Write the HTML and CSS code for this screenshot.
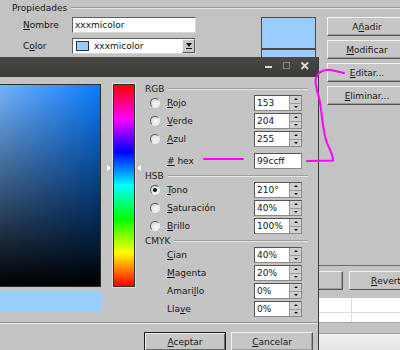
FILE: index.html
```html
<!DOCTYPE html>
<html>
  <head>
    <title>Colores</title>
    <meta charset="UTF-8" />
    <link rel="stylesheet" href="styles.css">
  </head>
  <body>
    <div class="app">
      <div class="top">
        <div class="legend"><span>Propiedades</span></div>
        <div class="props">
          <div class="form">
            <div class="frow">
              <label><u>N</u>ombre</label>
              <div class="entry">xxxmicolor</div>
            </div>
            <div class="frow">
              <label>C<u>o</u>lor</label>
              <div class="combo">
                <span class="chip"></span>
                <span class="ctext">xxxmicolor</span>
                <span class="carrow"></span>
              </div>
            </div>
          </div>
          <div class="preview">
            <div class="pv1"></div>
            <div class="pv2"></div>
          </div>
          <div class="side">
            <button class="btn">A<u>ñ</u>adir</button>
            <button class="btn"><u>M</u>odificar</button>
            <button class="btn"><u>E</u>ditar...</button>
            <button class="btn"><u>E</u>liminar...</button>
          </div>
        </div>
      </div>
      <div class="lower">
        <div class="lbtns">
          <button class="btn"></button>
          <button class="btn revert"><u>R</u>evert</button>
        </div>
        <div class="table">
          <div class="trow"><span class="cell"></span><span class="cell"></span></div>
          <div class="trow short"><span class="cell"></span><span class="cell"></span></div>
        </div>
        <div class="band"></div>
        <div class="pane"></div>
      </div>
    </div>

    <div class="dialog">
      <div class="titlebar">
        <svg width="48" height="20" viewBox="0 0 48 20">
          <rect x="2" y="9" width="7" height="2" fill="#dcd8cf"/>
          <rect x="20.5" y="5.5" width="6" height="6" fill="none" stroke="#8a8782" stroke-width="1"/>
          <path d="M38.5 5.5 L45 12 M45 5.5 L38.5 12" stroke="#dcd8cf" stroke-width="2"/>
        </svg>
      </div>
      <div class="dbody">
        <div class="svcol">
          <div class="field"></div>
          <div class="swatch"></div>
        </div>
        <div class="huecol">
          <div class="hue"></div>
          <span class="harrow right"></span>
          <span class="harrow left"></span>
        </div>
        <div class="panel">
          <div class="ghead">RGB</div>
          <div class="row">
            <span class="slot"><span class="radio"></span></span>
            <span class="lbl"><u>R</u>ojo</span>
            <span class="spin"><span class="val">153</span><span class="arrows"><i class="up"></i><i class="dn"></i></span></span>
          </div>
          <div class="row">
            <span class="slot"><span class="radio"></span></span>
            <span class="lbl"><u>V</u>erde</span>
            <span class="spin"><span class="val">204</span><span class="arrows"><i class="up"></i><i class="dn"></i></span></span>
          </div>
          <div class="row last">
            <span class="slot"><span class="radio"></span></span>
            <span class="lbl"><u>A</u>zul</span>
            <span class="spin"><span class="val">255</span><span class="arrows"><i class="up"></i><i class="dn"></i></span></span>
          </div>
          <div class="row hex">
            <span class="slot"></span>
            <span class="lbl"><u>#</u> hex</span>
            <span class="spin"><span class="val">99ccff</span></span>
          </div>

          <div class="ghead">HSB</div>
          <div class="row">
            <span class="slot"><span class="radio on"></span></span>
            <span class="lbl"><u>T</u>ono</span>
            <span class="spin"><span class="val">210°</span><span class="arrows"><i class="up"></i><i class="dn"></i></span></span>
          </div>
          <div class="row">
            <span class="slot"><span class="radio"></span></span>
            <span class="lbl"><u>S</u>aturación</span>
            <span class="spin"><span class="val">40%</span><span class="arrows"><i class="up"></i><i class="dn"></i></span></span>
          </div>
          <div class="row last">
            <span class="slot"><span class="radio"></span></span>
            <span class="lbl"><u>B</u>rillo</span>
            <span class="spin"><span class="val">100%</span><span class="arrows"><i class="up"></i><i class="dn"></i></span></span>
          </div>

          <div class="ghead">CMYK</div>
          <div class="row">
            <span class="slot"></span>
            <span class="lbl"><u>C</u>ian</span>
            <span class="spin"><span class="val">40%</span><span class="arrows"><i class="up"></i><i class="dn"></i></span></span>
          </div>
          <div class="row">
            <span class="slot"></span>
            <span class="lbl"><u>M</u>agenta</span>
            <span class="spin"><span class="val">20%</span><span class="arrows"><i class="up"></i><i class="dn"></i></span></span>
          </div>
          <div class="row">
            <span class="slot"></span>
            <span class="lbl">Amari<u>l</u>lo</span>
            <span class="spin"><span class="val">0%</span><span class="arrows"><i class="up"></i><i class="dn"></i></span></span>
          </div>
          <div class="row last">
            <span class="slot"></span>
            <span class="lbl">Lla<u>v</u>e</span>
            <span class="spin"><span class="val">0%</span><span class="arrows"><i class="up"></i><i class="dn"></i></span></span>
          </div>
        </div>
      </div>
      <div class="dsep"></div>
      <div class="dbtns">
        <button class="btn default"><u>A</u>ceptar</button>
        <button class="btn"><u>C</u>ancelar</button>
      </div>
    </div>

    <svg class="marks" width="400" height="350" viewBox="0 0 400 350">
      <path d="M204 159 L243 159" />
      <path d="M307 161 L333 160.5 C333 154 329 148 327 143 C323 132 322 115 320 102 C318 92 314 84 316 78 C318 72 324 69 331 70 L344 73" />
    </svg>
  </body>
</html>
```
FILE: styles.css
```css
*{
    margin: 0;
    padding: 0;
    box-sizing: border-box;
}
body{
    position: relative;
    width: 400px;
    height: 350px;
    overflow: hidden;
    background: #c3c3c3;
    font-family: "DejaVu Sans", sans-serif;
    font-size: 9px;
    color: #161616;
}
u{
    text-decoration: underline;
    text-underline-offset: 1px;
}
.btn{
    display: flex;
    justify-content: center;
    align-items: center;
    height: 19px;
    background: #c6c6c6;
    border: 1px solid;
    border-color: #f2f2f2 #555 #555 #f2f2f2;
    box-shadow: inset -1px -1px #9a9a9a;
    font: inherit;
    color: #161616;
}

/* ventana de fondo */
.top{
    height: 265px;
}
.legend{
    display: flex;
    align-items: center;
    height: 16px;
    padding-left: 12px;
}
.legend::after{
    content: '';
    flex: 1;
    margin-left: 4px;
    border-top: 1px solid #9a9a9a;
    border-bottom: 1px solid #e4e4e4;
}
.props{
    display: flex;
    margin-top: 1px;
}
.props > *{
    flex-shrink: 0;
}
.form{
    padding-left: 23px;
}
.frow{
    display: flex;
    align-items: center;
    height: 16px;
    margin-bottom: 5px;
}
.frow label{
    width: 49px;
}
.entry{
    width: 124px;
    height: 16px;
    background: #fff;
    border: 1px solid;
    border-color: #5e5e5e #d8d8d8 #d8d8d8 #5e5e5e;
    padding-left: 2px;
    line-height: 14px;
}
.combo{
    display: flex;
    align-items: center;
    width: 124px;
    height: 16px;
    background: #fff;
    border: 1px solid;
    border-color: #5e5e5e #d8d8d8 #d8d8d8 #5e5e5e;
}
.chip{
    width: 13px;
    height: 10px;
    margin-left: 3px;
    background: #99ccff;
    border: 1px solid #333;
}
.ctext{
    flex: 1;
    margin-left: 5px;
}
.carrow{
    display: flex;
    flex-direction: column;
    justify-content: center;
    align-items: center;
    width: 13px;
    height: 14px;
    background: #c8c8c8;
    border: 1px solid;
    border-color: #f2f2f2 #555 #555 #f2f2f2;
}
.carrow::before{
    content: '';
    border-top: 4px solid #111;
    border-left: 3px solid transparent;
    border-right: 3px solid transparent;
}
.carrow::after{
    content: '';
    width: 6px;
    height: 1px;
    margin-top: 1px;
    background: #111;
}
.preview{
    width: 55px;
    margin-left: 65px;
}
.pv1{
    height: 32px;
    background: #99ccff;
    border: 1px solid #4a4a4a;
}
.pv2{
    height: 20px;
    background: #99ccff;
    border: 1px solid #4a4a4a;
}
.side{
    display: flex;
    flex-direction: column;
    gap: 4px;
    width: 80px;
    margin-left: 11px;
}
.lower{
    border-top: 1px solid #6c6c6c;
    padding-top: 5px;
}
.lbtns{
    display: flex;
    gap: 6px;
    padding-left: 253px;
}
.lbtns .btn{
    width: 90px;
    flex-shrink: 0;
}
.lbtns .revert{
    width: 51px;
    justify-content: flex-start;
    padding-left: 21px;
    border-right: 0;
    box-shadow: none;
}
.table{
    margin: 8px 0 0 250px;
    background: #fff;
    border-bottom: 1px solid #a8a8a8;
}
.trow{
    display: flex;
    height: 15px;
    border-bottom: 1px solid #dcdcdc;
}
.trow.short{
    height: 9px;
    border-bottom: 0;
}
.cell{
    width: 102px;
    border-right: 1px solid #dcdcdc;
}
.cell + .cell{
    flex: 1;
    border-right: 0;
}
.band{
    height: 10px;
}
.pane{
    height: 20px;
    border-top: 1px solid #a0a0a0;
    background: linear-gradient(#f2f2f2, #e2e2e2);
}

/* dialogo de color */
.dialog{
    position: absolute;
    left: 0;
    top: 57px;
    width: 319px;
    height: 293px;
    background: #c4c4c4;
    border-right: 1px solid #3a3a3a;
}
.titlebar{
    display: flex;
    justify-content: flex-end;
    height: 20px;
    padding-right: 7px;
    background: linear-gradient(#4b4a46, #3a3935);
}
.dbody{
    display: flex;
    height: 245px;
    padding-top: 5px;
}
.svcol{
    width: 102px;
    margin-top: 2px;
}
.field{
    width: 101px;
    height: 203px;
    border: 1px solid #2e2e2e;
    border-left: 0;
    background:
        linear-gradient(rgba(0, 0, 0, 0), #000),
        linear-gradient(to right, #74b4ff, #0a7cff);
}
.swatch{
    height: 21px;
    margin-top: 4px;
    background: #99ccff;
}
.huecol{
    position: relative;
    width: 22px;
    margin: 2px 0 0 11px;
}
.hue{
    height: 203px;
    border: 1px solid #2e2e2e;
    box-shadow: 0 0 0 1px #e0e0e0;
    background: linear-gradient(#ff0000, #ff00ff, #0000ff, #00ffff, #00ff00, #ffff00, #ff0000);
}
.harrow{
    position: absolute;
    top: 81px;
    border-top: 3px solid transparent;
    border-bottom: 3px solid transparent;
}
.harrow.right{
    left: -6px;
    border-left: 4px solid #fff;
}
.harrow.left{
    left: 24px;
    border-right: 4px solid #fff;
}
.panel{
    width: 165px;
    margin-left: 10px;
}
.ghead{
    display: flex;
    align-items: center;
    height: 13px;
    color: #222;
}
.ghead::after{
    content: '';
    flex: 1;
    margin: 0 2px 0 4px;
    border-top: 1px solid #9c9c9c;
    border-bottom: 1px solid #e6e6e6;
}
.row{
    display: flex;
    align-items: center;
    height: 16px;
    margin-bottom: 2px;
}
.row.last{
    margin-bottom: 0;
}
.row.hex{
    margin-top: 6px;
    margin-bottom: 0;
}
.slot{
    display: flex;
    width: 22px;
    padding-left: 5px;
}
.radio{
    position: relative;
    width: 10px;
    height: 10px;
    border-radius: 50%;
    border: 1px solid;
    border-color: #5a5a5a #f4f4f4 #f4f4f4 #5a5a5a;
    background: radial-gradient(circle at 60% 60%, #fafafa, #d0d0d0);
}
.radio.on::after{
    content: '';
    position: absolute;
    left: 2px;
    top: 2px;
    width: 4px;
    height: 4px;
    border-radius: 50%;
    background: #111;
}
.lbl{
    flex: 1;
}
.spin{
    display: flex;
    width: 48px;
    height: 16px;
    background: #fff;
    border: 1px solid;
    border-color: #555 #8a8a8a #8a8a8a #555;
    margin-right: 8px;
}
.val{
    flex: 1;
    padding-left: 2px;
    line-height: 14px;
}
.arrows{
    display: flex;
    flex-direction: column;
    width: 12px;
    background: #cfcfcf;
    border-left: 1px solid #9a9a9a;
}
.arrows i{
    flex: 1;
    display: flex;
    justify-content: center;
    align-items: center;
}
.arrows .dn{
    border-top: 1px solid #9a9a9a;
}
.arrows .up::before{
    content: '';
    border-bottom: 2px solid #111;
    border-left: 2px solid transparent;
    border-right: 2px solid transparent;
}
.arrows .dn::before{
    content: '';
    border-top: 2px solid #111;
    border-left: 2px solid transparent;
    border-right: 2px solid transparent;
}
.dsep{
    border-top: 1px solid #8f8f8f;
    border-bottom: 1px solid #ececec;
}
.dbtns{
    display: flex;
    justify-content: flex-end;
    gap: 5px;
    padding: 8px 5px 0 0;
}
.dbtns .btn{
    width: 82px;
}
.btn.default{
    border-color: #1c1c1c;
    box-shadow: inset 1px 1px #f2f2f2, inset -1px -1px #6a6a6a;
}

.marks{
    position: absolute;
    left: 0;
    top: 0;
    pointer-events: none;
}
.marks path{
    fill: none;
    stroke: #ff00ff;
    stroke-width: 2;
    stroke-linecap: round;
    stroke-linejoin: round;
}
```
